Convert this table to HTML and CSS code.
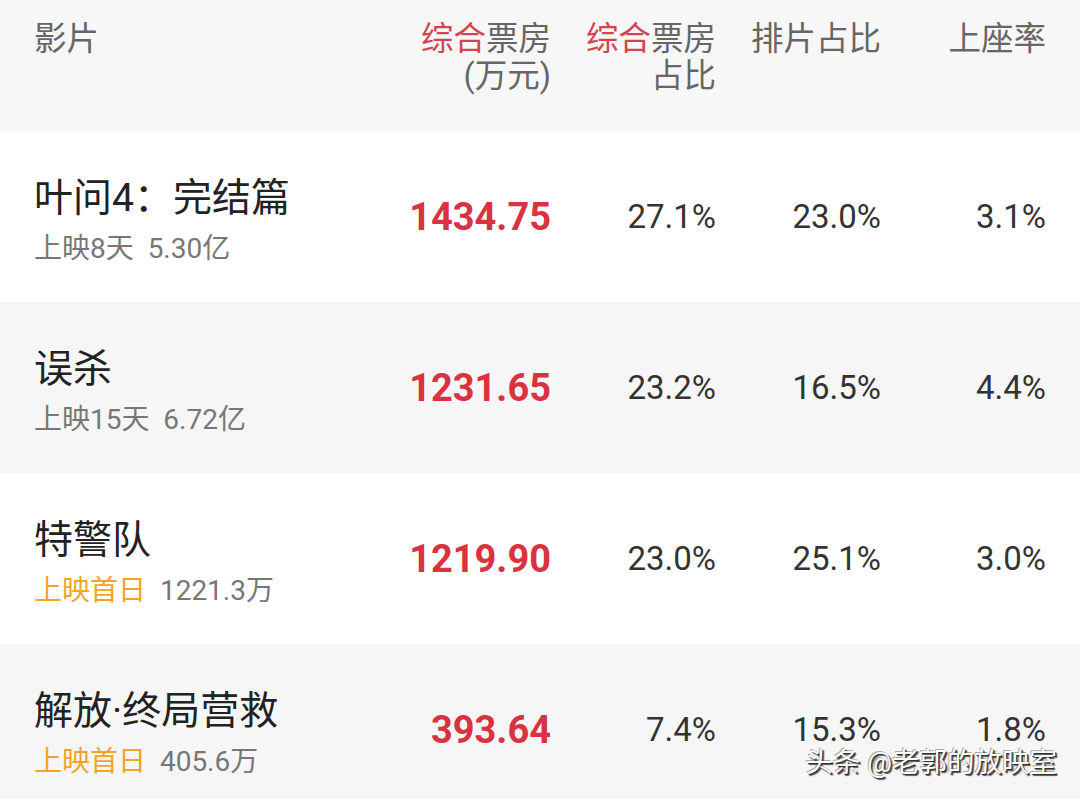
FILE: index.html
```html
<!DOCTYPE html>
<html lang="zh-CN">
<head>
<meta charset="utf-8">
<title>票房</title>
<link rel="stylesheet" href="styles.css">
</head>
<body>
<div class="board">
  <div class="row head">
    <div class="cell name">影片</div>
    <div class="cell num"><span class="hl">综合</span>票房<br>(万元)</div>
    <div class="cell num"><span class="hl">综合</span>票房<br>占比</div>
    <div class="cell num">排片占比</div>
    <div class="cell num">上座率</div>
  </div>

  <div class="row">
    <div class="cell name">
      <div class="title">叶问4：完结篇</div>
      <div class="sub">上映8天&nbsp;&nbsp;5.30亿</div>
    </div>
    <div class="cell num box">1434.75</div>
    <div class="cell num pct">27.1%</div>
    <div class="cell num pct">23.0%</div>
    <div class="cell num pct">3.1%</div>
  </div>

  <div class="row alt">
    <div class="cell name">
      <div class="title">误杀</div>
      <div class="sub">上映15天&nbsp;&nbsp;6.72亿</div>
    </div>
    <div class="cell num box">1231.65</div>
    <div class="cell num pct">23.2%</div>
    <div class="cell num pct">16.5%</div>
    <div class="cell num pct">4.4%</div>
  </div>

  <div class="row">
    <div class="cell name">
      <div class="title">特警队</div>
      <div class="sub"><span class="first">上映首日</span>&nbsp;&nbsp;1221.3万</div>
    </div>
    <div class="cell num box">1219.90</div>
    <div class="cell num pct">23.0%</div>
    <div class="cell num pct">25.1%</div>
    <div class="cell num pct">3.0%</div>
  </div>

  <div class="row alt">
    <div class="cell name">
      <div class="title">解放·终局营救</div>
      <div class="sub"><span class="first">上映首日</span>&nbsp;&nbsp;405.6万</div>
    </div>
    <div class="cell num box">393.64</div>
    <div class="cell num pct">7.4%</div>
    <div class="cell num pct">15.3%</div>
    <div class="cell num pct">1.8%</div>
  </div>

  <div class="watermark">头条 @老郭的放映室</div>
</div>
</body>
</html>
```
FILE: styles.css
```css
html, body {
  margin: 0;
  padding: 0;
  background: #ffffff;
}
body {
  width: 1080px;
  height: 799px;
  overflow: hidden;
  font-family: Roboto, "Noto Sans CJK SC", sans-serif;
}
.board {
  position: relative;
  width: 1080px;
  height: 799px;
}
.row {
  display: grid;
  grid-template-columns: 1fr 165px 165px 165px 165px;
  padding: 0 34px;
  height: 171px;
  align-items: center;
  background: #ffffff;
}
.row.alt {
  background: #f6f6f6;
}
.row.head {
  height: 131px;
  align-items: start;
  background: #f7f7f7;
  color: #666666;
  font-size: 32.5px;
  line-height: 37px;
  padding-top: 21px;
  box-sizing: border-box;
}
.hl {
  color: #d2444f;
}
.cell.num {
  text-align: right;
}
.cell.name {
  padding-top: 8px;
}
.row.head .cell.name {
  padding-top: 0;
}
.title {
  font-size: 39px;
  line-height: 46px;
  color: #222222;
}
.sub {
  margin-top: 11px;
  font-size: 28px;
  line-height: 34px;
  color: #777777;
}
.first {
  color: #f0a42a;
}
.box {
  font-size: 38px;
  font-weight: 700;
  color: #d93240;
}
.pct {
  font-size: 33px;
  color: #333333;
}
.watermark {
  position: absolute;
  right: 23px;
  bottom: 21px;
  font-size: 27.5px;
  line-height: 30px;
  color: #ffffff;
  text-shadow: 1px 1px 0 #333333, 2px 2px 1px #555555, -1px -1px 0 #aaaaaa;
}
```
